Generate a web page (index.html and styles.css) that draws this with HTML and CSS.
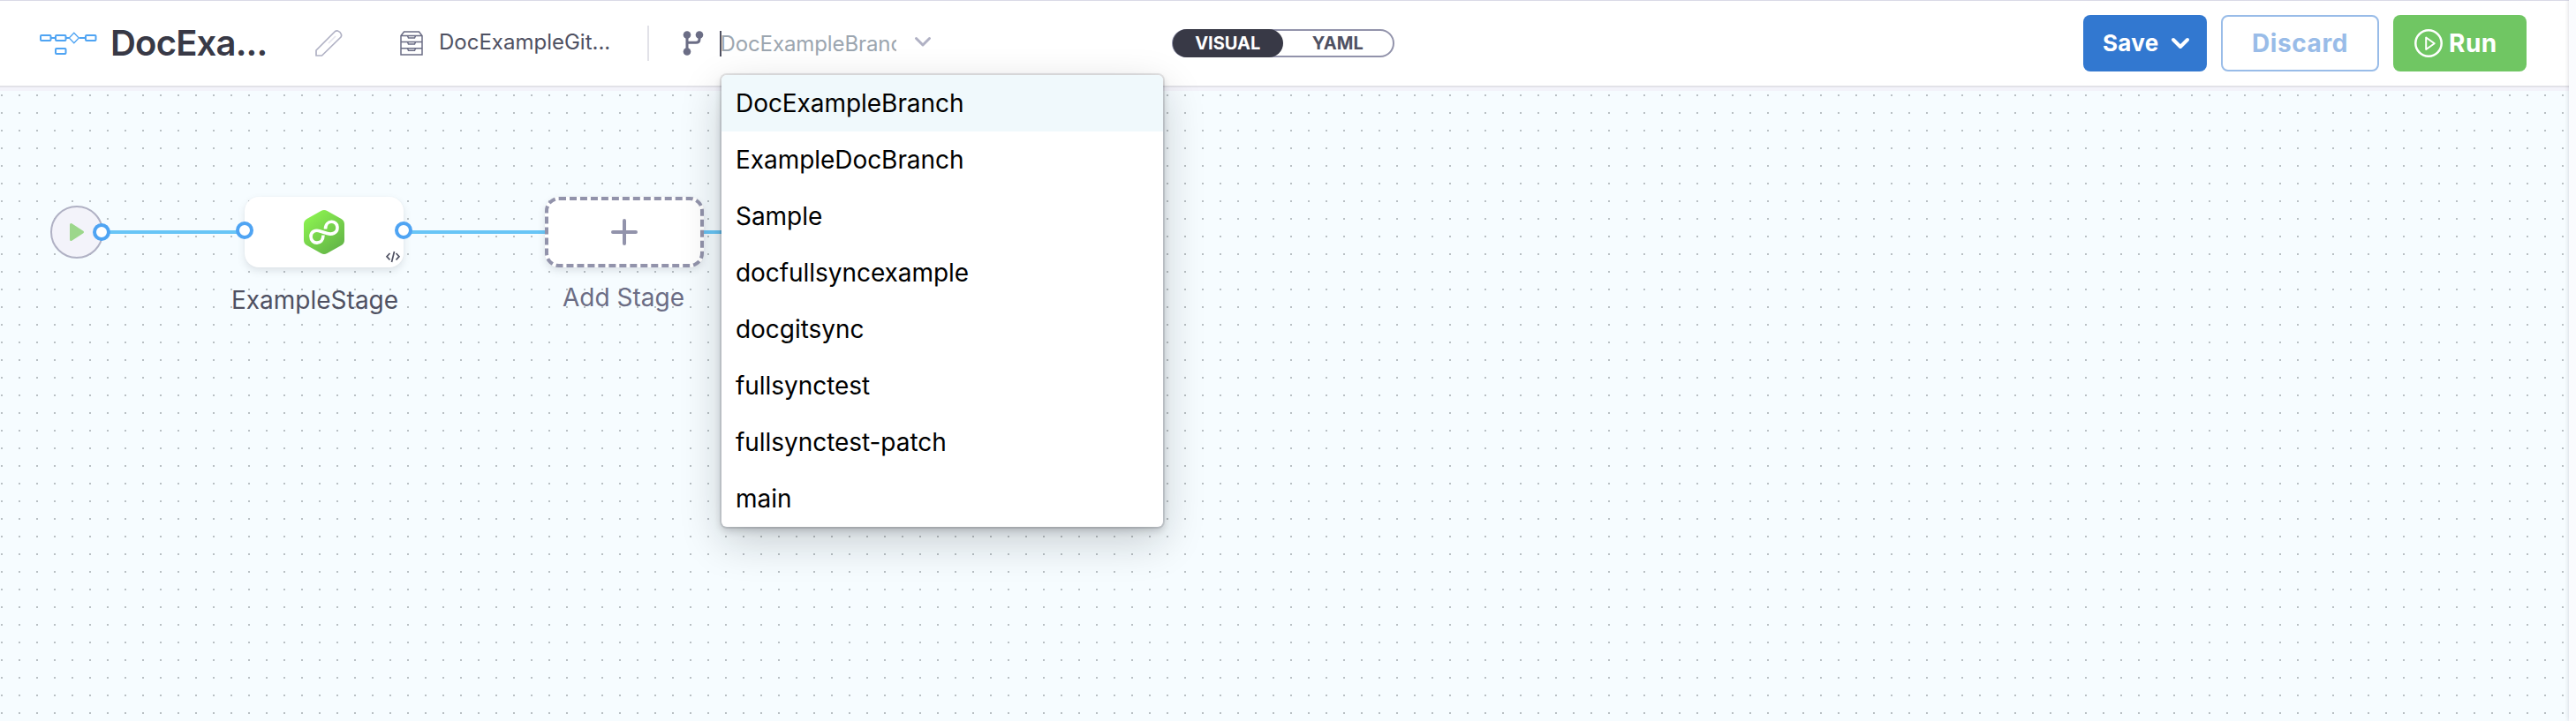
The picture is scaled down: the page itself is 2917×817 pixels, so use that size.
FILE: index.html
```
<!DOCTYPE html>
<html lang="en">
<head>
<meta charset="utf-8">
<title>Pipeline Studio</title>
<link rel="stylesheet" href="styles.css">
</head>
<body>
<div class="app">
  <main class="studio">
    <header class="toolbar">
      <svg class="logo" width="66" height="28" viewBox="0 0 66 28" fill="none" stroke="#4fa4f3" stroke-width="2">
        <rect x="2" y="4" width="11.500" height="6" rx="1"/>
        <rect x="19" y="4" width="11.500" height="6" rx="1"/>
        <rect x="53" y="4" width="11.500" height="6" rx="1"/>
        <rect x="19" y="19" width="11.500" height="6" rx="1"/>
        <path d="M14 7h4M31 7h3M46 7h6"/>
        <path stroke-width="1.300" d="M34.300 7l5.500-5.700 5.500 5.700-5.500 5.700z"/>
      </svg>
      <h1 class="title">DocExa...</h1>
      <svg class="edit" width="32" height="32" viewBox="0 0 32 32" fill="none" stroke="#b0b1c4" stroke-width="1.700" stroke-linejoin="round">
        <path d="M2 30v-6L23.500 2.500q1.500-1 3-.5 3 1 4 4 .5 1.500-.5 3L8.500 30z"/>
        <path d="M24 8L16 16" stroke="#e6e6ee"/>
      </svg>
      <svg class="repo" width="26" height="28" viewBox="0 0 26 28" fill="none" stroke="#6b6d85" stroke-width="1.500">
        <path d="M1 5.500L4.500 1h17L25 5.500V27H1zM1 5.500h24M1 12.500h24M1 19.800h24"/>
        <path d="M8.500 5.500l1 2.500h7l1-2.500M8.500 12.500l1 2.500h7l1-2.500M8.500 19.800l1 2.500h7l1-2.500"/>
      </svg>
      <span class="repo-name">DocExampleGit...</span>
      <span class="divider"></span>
      <svg class="branch" width="24" height="28" viewBox="0 0 24 28" fill="#6b6d85">
        <circle cx="5" cy="4.500" r="4.300"/><circle cx="19" cy="4.500" r="4.300"/><circle cx="5" cy="23.500" r="4.300"/>
        <path d="M5 5v18M5 13.200h10q4 0 4-4V6" fill="none" stroke="#6b6d85" stroke-width="3"/>
      </svg>
      <span class="branch-input">DocExampleBranch</span>
      <svg class="caret-down" width="20" height="14" viewBox="0 0 20 14" fill="none" stroke="#b0b1c4" stroke-width="3" stroke-linecap="round" stroke-linejoin="round"><path d="M2.500 2.500l7.500 7.500 7.500-7.500"/></svg>
      <div class="toggle">
        <span class="option selected">VISUAL</span>
        <span class="option">YAML</span>
      </div>
      <div class="actions">
        <button class="btn save">Save
          <svg width="22" height="16" viewBox="0 0 22 16" fill="none" stroke="#fff" stroke-width="4" stroke-linecap="round" stroke-linejoin="round"><path d="M3 4l8 8 8-8"/></svg>
        </button>
        <button class="btn discard">Discard</button>
        <button class="btn run">
          <svg width="32" height="32" viewBox="0 0 32 32" fill="none" stroke="#fff" stroke-width="2.500" stroke-linejoin="round"><circle cx="16" cy="16" r="14.700"/><path d="M13.200 9.500v13.500l9.500-6.800z" stroke-width="2"/></svg>
          Run
        </button>
      </div>
    </header>
    <section class="canvas">
      <svg class="links" width="1000" height="4"><path d="M115 2H277M457 2H617M797 2H1000" stroke="#68c5f6" stroke-width="4"/></svg>
      <div class="node start">
        <svg width="18" height="22" viewBox="0 0 18 22" fill="#9cd78b" stroke="#9cd78b" stroke-width="3" stroke-linejoin="round"><path d="M2.500 2.500v17L15.500 11z"/></svg>
      </div>
      <div class="node stage">
        <svg width="48" height="52" viewBox="0 0 48 52">
          <defs><linearGradient id="g" x1="0.100" y1="0.100" x2="0.800" y2="1"><stop offset="0" stop-color="#8cf350"/><stop offset="1" stop-color="#62b347"/></linearGradient></defs>
          <path fill="url(#g)" d="M20.500 2q3.500-2 7 0L43.500 11q3.500 2 3.500 6v18q0 4-3.500 6L27.500 50q-3.500 2-7 0L4.500 41Q1 39 1 35V17q0-4 3.500-6z"/>
          <path fill="none" stroke="#fff" stroke-width="3.600" d="M25.500 22.500C25.500 11.500 39 12 39 21c0 6.500-6.500 8-11.500 6.500L19.500 25C14 23 9 25.500 9 31c0 9.500 14 10 14-1.500"/>
        </svg>
        <svg class="code" width="18" height="14" viewBox="0 0 18 14" fill="none" stroke="#4f5162" stroke-width="1.700"><path d="M5.500 3L2 6.700 5.500 10.500M12.500 3L16 6.700 12.500 10.500M10.500 1L7.500 13"/></svg>
      </div>
      <div class="node add">
        <svg width="32" height="32" viewBox="0 0 32 32" fill="none" stroke="#9293ab" stroke-width="4" stroke-linecap="round"><path d="M16 3v26M3 16h26"/></svg>
      </div>
      <i class="port p1"></i><i class="port p2"></i><i class="port p3"></i>
      <span class="label stage-label">ExampleStage</span>
      <span class="label add-label">Add Stage</span>
    </section>
  </main>
  <aside class="rail"></aside>
  <ul class="menu">
    <li class="active">DocExampleBranch</li>
    <li>ExampleDocBranch</li>
    <li>Sample</li>
    <li>docfullsyncexample</li>
    <li>docgitsync</li>
    <li>fullsynctest</li>
    <li>fullsynctest-patch</li>
    <li>main</li>
  </ul>
</div>
</body>
</html>
```
FILE: styles.css
```
* { box-sizing: border-box; }
body { margin: 0; font-family: Inter, "Liberation Sans", sans-serif; color: #383946; }
.app { position: relative; display: flex; width: 2917px; height: 817px; overflow: hidden; background: #fafbfe; }
.studio { display: flex; flex-direction: column; width: 2909px; }
.rail { flex: 1; background: #fafbfe; box-shadow: 0 0 5px rgba(40, 41, 61, .2); z-index: 1; }
.toolbar { display: flex; align-items: center; height: 103px; padding: 0 48px 2px 44px; background: #fff; border-top: 1px solid #d9dae6; border-bottom: 4px solid #f3f3fa; box-shadow: inset 0 -2px #e2e2e8; }
.toolbar > * { flex: none; }
.title { width: 226px; margin: 0 0 1px 15px; font-size: 40px; line-height: 56px; font-weight: 600; letter-spacing: -.8px; }
.logo { margin-top: 2px; }
.edit { margin-left: 5px; }
.repo { margin-left: 65px; }
.repo-name { width: 212px; margin: 0 0 2px 18px; font-size: 24px; line-height: 32px; color: #4f5162; }
.divider { width: 2px; height: 40px; margin-left: 24px; background: #e2e2e8; }
.branch { margin-left: 38px; }
.branch-input { width: 200px; margin-left: 18px; border-left: 2px solid #4f5162; height: 29px; font-size: 24px; line-height: 30px; color: #9ca6b0; overflow: hidden; white-space: nowrap; text-indent: -1.5px; letter-spacing: -.1px; }
.caret-down { margin: 0 0 2px 20px; }
.toggle { display: flex; width: 252px; height: 32px; margin-left: 272px; border: 2px solid #9293ab; border-radius: 16px; font-size: 20px; font-weight: 700; line-height: 28px; color: #4f5162; text-align: center; }
.option { flex: 1; }
.option.selected { margin: -2px 0 -2px -1px; line-height: 32px; border-radius: 16px; color: #fff; background: #383946; }
.actions { display: flex; gap: 16px; margin-left: auto; }
.btn { display: flex; align-items: center; height: 64px; padding: 0; border: 0; border-radius: 8px; font: 700 28px/36px Inter, "Liberation Sans", sans-serif; color: #fff; }
.save { width: 140px; padding-left: 22px; gap: 14px; font-size: 26px; letter-spacing: .3px; background: #3278d0; }
.discard { width: 179px; justify-content: center; border: 2px solid #99bce8; color: #99bce8; background: #fff; letter-spacing: .6px; }
.run { width: 151px; padding-left: 24px; gap: 7px; background: #70c663; letter-spacing: .5px; }
.canvas { position: relative; flex: 1; background: conic-gradient(from 90deg at 18px 18px, #b9c0c4 90deg, #f6fcff 0) -17px -14px / 20px 20px; }
.links { position: absolute; left: 0; top: 158px; }
.node { position: absolute; display: flex; align-items: center; justify-content: center; }
.start { left: 57px; top: 130px; width: 60px; height: 60px; border: 2px solid #b0b1c4; border-radius: 50%; background: #f3f3fa; }
.stage, .add { top: 120px; width: 180px; height: 80px; border-radius: 16px; background: #fff; box-shadow: 0 4px 8px rgba(96, 97, 112, .16), 0 0 2px rgba(40, 41, 61, .04); }
.stage { left: 277px; }
.add { left: 617px; border: 4px dashed #9293ab; }
.code { position: absolute; right: 3px; bottom: 5px; }
.port { position: absolute; width: 20px; height: 20px; border: 4px solid #4fa4f3; border-radius: 50%; background: #fff; }
.p1 { left: 105px; top: 150px; }
.p2 { left: 267px; top: 148px; }
.p3 { left: 447px; top: 148px; }
.label { position: absolute; font-size: 28px; line-height: 36px; white-space: nowrap; }
.stage-label { left: 262px; top: 219px; color: #4f5162; }
.add-label { left: 637px; top: 216px; color: #6b6d85; }
.menu { position: absolute; z-index: 2; left: 817px; top: 85px; width: 500px; margin: 0; padding: 0; list-style: none; overflow: hidden; border-radius: 6px; background: #fff; color: #000; font-size: 28px; line-height: 64px; letter-spacing: -.05px; box-shadow: 0 0 0 2px rgba(16, 22, 26, .1), 0 4px 8px rgba(16, 22, 26, .2), 0 16px 48px rgba(16, 22, 26, .2); }
.menu li { height: 64px; padding-left: 16px; }
.menu .active { background: #f0f9fc; }
```
